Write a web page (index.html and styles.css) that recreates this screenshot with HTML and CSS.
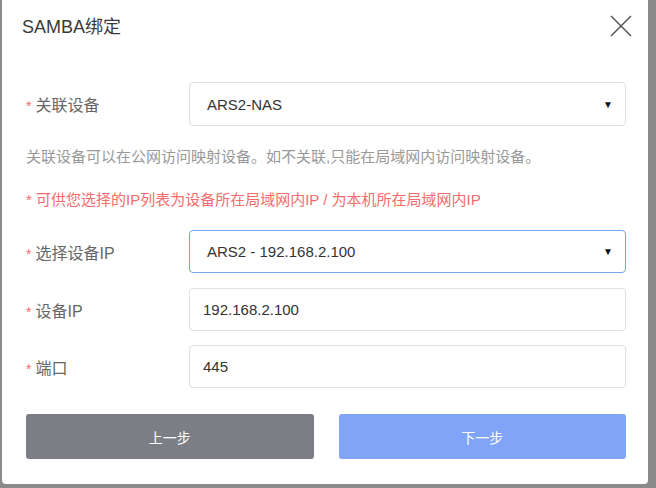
FILE: index.html
```html
<!DOCTYPE html>
<html lang="zh">
<head>
<meta charset="utf-8">
<link rel="stylesheet" href="styles.css">
</head>
<body>
<div class="dialog">
  <div class="header">
    <div class="title">SAMBA绑定</div>
    <svg class="close" width="22" height="22" viewBox="0 0 22 22"><path d="M1 1L21 21M21 1L1 21" stroke="#555" stroke-width="1.5" fill="none"/></svg>
  </div>
  <div class="form">
    <div class="row">
      <div class="label"><span class="star">*</span>关联设备</div>
      <div class="field select"><span>ARS2-NAS</span><span class="arrow">▼</span></div>
    </div>
    <div class="help">关联设备可以在公网访问映射设备。如不关联,只能在局域网内访问映射设备。</div>
    <div class="warn">* 可供您选择的IP列表为设备所在局域网内IP / 为本机所在局域网内IP</div>
    <div class="row r2">
      <div class="label"><span class="star">*</span>选择设备IP</div>
      <div class="field select focus"><span>ARS2 - 192.168.2.100</span><span class="arrow">▼</span></div>
    </div>
    <div class="row r3">
      <div class="label"><span class="star">*</span>设备IP</div>
      <div class="field input"><span>192.168.2.100</span></div>
    </div>
    <div class="row r4">
      <div class="label"><span class="star">*</span>端口</div>
      <div class="field input"><span>445</span></div>
    </div>
  </div>
  <div class="buttons">
    <div class="btn prev">上一步</div>
    <div class="btn next">下一步</div>
  </div>
</div>
</body>
</html>
```
FILE: styles.css
```css
html, body {
  margin: 0;
  padding: 0;
  background: #8a8a8a;
  width: 656px;
  height: 488px;
  overflow: hidden;
}
body {
  font-family: "Liberation Sans", Arial, "Noto Sans CJK SC", sans-serif;
}
.dialog {
  margin-left: 2px;
  width: 646px;
  height: 484px;
  background: #fff;
  border-radius: 0 0 4px 4px;
  box-sizing: border-box;
  padding: 0 22px 0 24px;
  display: flex;
  flex-direction: column;
}
.header {
  height: 52px;
  display: flex;
  align-items: center;
  justify-content: space-between;
}
.title {
  font-size: 18px;
  color: #3a3a3a;
  margin-top: -2px;
  margin-left: -4px;
}
.close {
  margin-right: -6px;
}
.form {
  margin-top: 30px;
  display: flex;
  flex-direction: column;
}
.row {
  display: flex;
  align-items: center;
  height: 44px;
}
.r2, .r3, .r4 { height: 43px; }
.r2 { margin-top: 20px; }
.r3 { margin-top: 15px; }
.r4 { margin-top: 14px; }
.label {
  width: 163px;
  font-size: 16px;
  color: #666;
}
.star {
  color: #f56c6c;
  margin-right: 4px;
  font-size: 14px;
}
.field {
  flex: 1;
  height: 100%;
  box-sizing: border-box;
  border: 1px solid #dcdfe6;
  border-radius: 4px;
  display: flex;
  align-items: center;
  justify-content: space-between;
  font-size: 15px;
  color: #333;
}
.select { padding: 0 12px 0 17px; }
.input { padding: 0 13px; }
.focus { border-color: #6ea6f3; }
.arrow {
  font-size: 10px;
  color: #111;
}
.help {
  margin-top: 21px;
  font-size: 15px;
  line-height: 20px;
  color: #999;
}
.warn {
  margin-top: 23px;
  font-size: 15px;
  line-height: 20px;
  color: #f56c6c;
}
.buttons {
  margin-top: 26px;
  display: flex;
  gap: 25px;
}
.btn {
  flex: 1;
  height: 45px;
  border-radius: 3px;
  color: #fff;
  font-size: 14px;
  display: flex;
  align-items: center;
  justify-content: center;
}
.prev { background: #7b7e84; }
.next { background: #80a4f8; }
```
